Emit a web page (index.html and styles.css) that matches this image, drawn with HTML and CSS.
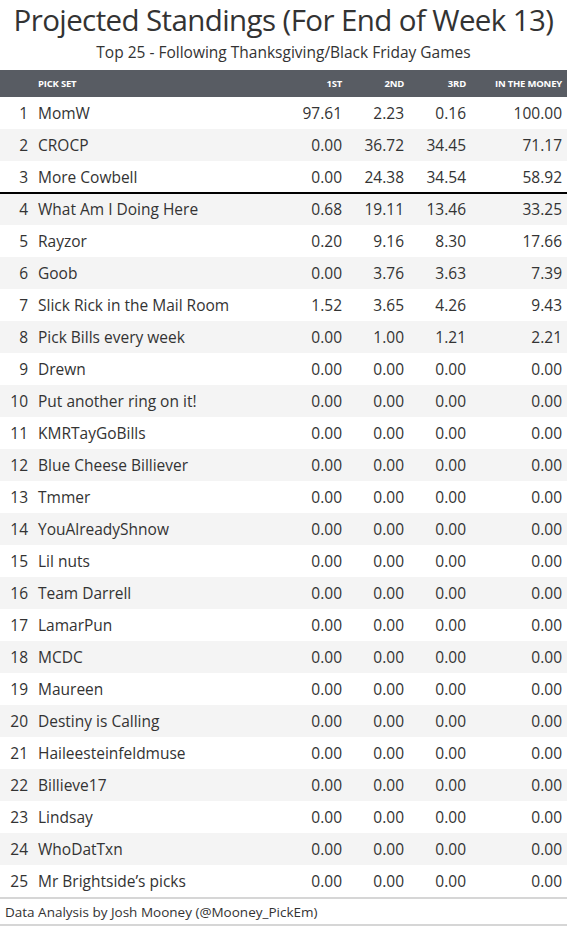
FILE: index.html
```html
<!DOCTYPE html>
<html>
<head>
<meta charset="utf-8">
<link rel="stylesheet" href="styles.css">
</head>
<body>
<div class="page">
  <h1 class="title">Projected Standings (For End of Week 13)</h1>
  <p class="subtitle">Top 25 - Following Thanksgiving/Black Friday Games</p>
  <table class="standings">
    <colgroup>
      <col class="c-rank"><col class="c-name"><col class="c-num1"><col class="c-num"><col class="c-num"><col class="c-money">
    </colgroup>
    <thead>
      <tr><th></th><th class="name">Pick Set</th><th>1st</th><th>2nd</th><th>3rd</th><th>In the Money</th></tr>
    </thead>
    <tbody>
      <tr><td>1</td><td class="name">MomW</td><td>97.61</td><td>2.23</td><td>0.16</td><td>100.00</td></tr>
      <tr><td>2</td><td class="name">CROCP</td><td>0.00</td><td>36.72</td><td>34.45</td><td>71.17</td></tr>
      <tr class="cutoff"><td>3</td><td class="name">More Cowbell</td><td>0.00</td><td>24.38</td><td>34.54</td><td>58.92</td></tr>
      <tr class="after-cutoff"><td>4</td><td class="name">What Am I Doing Here</td><td>0.68</td><td>19.11</td><td>13.46</td><td>33.25</td></tr>
      <tr><td>5</td><td class="name">Rayzor</td><td>0.20</td><td>9.16</td><td>8.30</td><td>17.66</td></tr>
      <tr><td>6</td><td class="name">Goob</td><td>0.00</td><td>3.76</td><td>3.63</td><td>7.39</td></tr>
      <tr><td>7</td><td class="name">Slick Rick in the Mail Room</td><td>1.52</td><td>3.65</td><td>4.26</td><td>9.43</td></tr>
      <tr><td>8</td><td class="name">Pick Bills every week</td><td>0.00</td><td>1.00</td><td>1.21</td><td>2.21</td></tr>
      <tr><td>9</td><td class="name">Drewn</td><td>0.00</td><td>0.00</td><td>0.00</td><td>0.00</td></tr>
      <tr><td>10</td><td class="name">Put another ring on it!</td><td>0.00</td><td>0.00</td><td>0.00</td><td>0.00</td></tr>
      <tr><td>11</td><td class="name">KMRTayGoBills</td><td>0.00</td><td>0.00</td><td>0.00</td><td>0.00</td></tr>
      <tr><td>12</td><td class="name">Blue Cheese Billiever</td><td>0.00</td><td>0.00</td><td>0.00</td><td>0.00</td></tr>
      <tr><td>13</td><td class="name">Tmmer</td><td>0.00</td><td>0.00</td><td>0.00</td><td>0.00</td></tr>
      <tr><td>14</td><td class="name">YouAlreadyShnow</td><td>0.00</td><td>0.00</td><td>0.00</td><td>0.00</td></tr>
      <tr><td>15</td><td class="name">Lil nuts</td><td>0.00</td><td>0.00</td><td>0.00</td><td>0.00</td></tr>
      <tr><td>16</td><td class="name">Team Darrell</td><td>0.00</td><td>0.00</td><td>0.00</td><td>0.00</td></tr>
      <tr><td>17</td><td class="name">LamarPun</td><td>0.00</td><td>0.00</td><td>0.00</td><td>0.00</td></tr>
      <tr><td>18</td><td class="name">MCDC</td><td>0.00</td><td>0.00</td><td>0.00</td><td>0.00</td></tr>
      <tr><td>19</td><td class="name">Maureen</td><td>0.00</td><td>0.00</td><td>0.00</td><td>0.00</td></tr>
      <tr><td>20</td><td class="name">Destiny is Calling</td><td>0.00</td><td>0.00</td><td>0.00</td><td>0.00</td></tr>
      <tr><td>21</td><td class="name">Haileesteinfeldmuse</td><td>0.00</td><td>0.00</td><td>0.00</td><td>0.00</td></tr>
      <tr><td>22</td><td class="name">Billieve17</td><td>0.00</td><td>0.00</td><td>0.00</td><td>0.00</td></tr>
      <tr><td>23</td><td class="name">Lindsay</td><td>0.00</td><td>0.00</td><td>0.00</td><td>0.00</td></tr>
      <tr><td>24</td><td class="name">WhoDatTxn</td><td>0.00</td><td>0.00</td><td>0.00</td><td>0.00</td></tr>
      <tr><td>25</td><td class="name">Mr Brightside’s picks</td><td>0.00</td><td>0.00</td><td>0.00</td><td>0.00</td></tr>
    </tbody>
  </table>
  <div class="footer">Data Analysis by Josh Mooney (@Mooney_PickEm)</div>
</div>
</body>
</html>
```

FILE: styles.css
```css
html, body {
  margin: 0;
  padding: 0;
  background: #ffffff;
}
.page {
  width: 567px;
  font-family: "Open Sans", "DejaVu Sans", sans-serif;
  color: #333333;
}
.title {
  margin: 0;
  height: 40px;
  font-size: 29.5px;
  font-weight: 400;
  line-height: 40px;
  text-align: center;
  color: #333333;
  letter-spacing: -0.6px;
  white-space: nowrap;
}
.subtitle {
  margin: 0;
  height: 30px;
  font-size: 15.5px;
  line-height: 24px;
  text-align: center;
  color: #333333;
  white-space: nowrap;
}
.standings {
  width: 567px;
  border-collapse: collapse;
  table-layout: fixed;
}
.c-rank { width: 38px; }
.c-num1 { width: 70px; }
.c-num { width: 62px; }
.c-money { width: 101px; }
.standings th {
  height: 27px;
  padding: 0;
  background: #585c63;
  color: #ffffff;
  font-size: 9.5px;
  font-weight: 700;
  text-transform: uppercase;
  text-align: right;
  letter-spacing: -0.2px;
}
.standings th:last-child,
.standings td:last-child {
  padding-right: 5px;
}
.standings td {
  height: 32px;
  padding: 0;
  font-size: 15.5px;
  text-align: right;
  color: #333333;
  white-space: nowrap;
}
.standings td:first-child {
  padding-right: 10px;
}
.standings .name {
  text-align: left;
}
.standings tbody tr:nth-child(even) td {
  background: #f4f4f4;
}
.standings tr.cutoff td {
  box-shadow: inset 0 -1px 0 #000000;
}
.standings tr.after-cutoff td {
  box-shadow: inset 0 1px 0 #000000;
}
.standings tbody tr:last-child td {
  border-bottom: 2px solid #d6d6d6;
}
.footer {
  height: 25px;
  padding-left: 5px;
  font-size: 13.5px;
  line-height: 26px;
  border-bottom: 2px solid #d6d6d6;
  color: #333333;
  white-space: nowrap;
}
```
